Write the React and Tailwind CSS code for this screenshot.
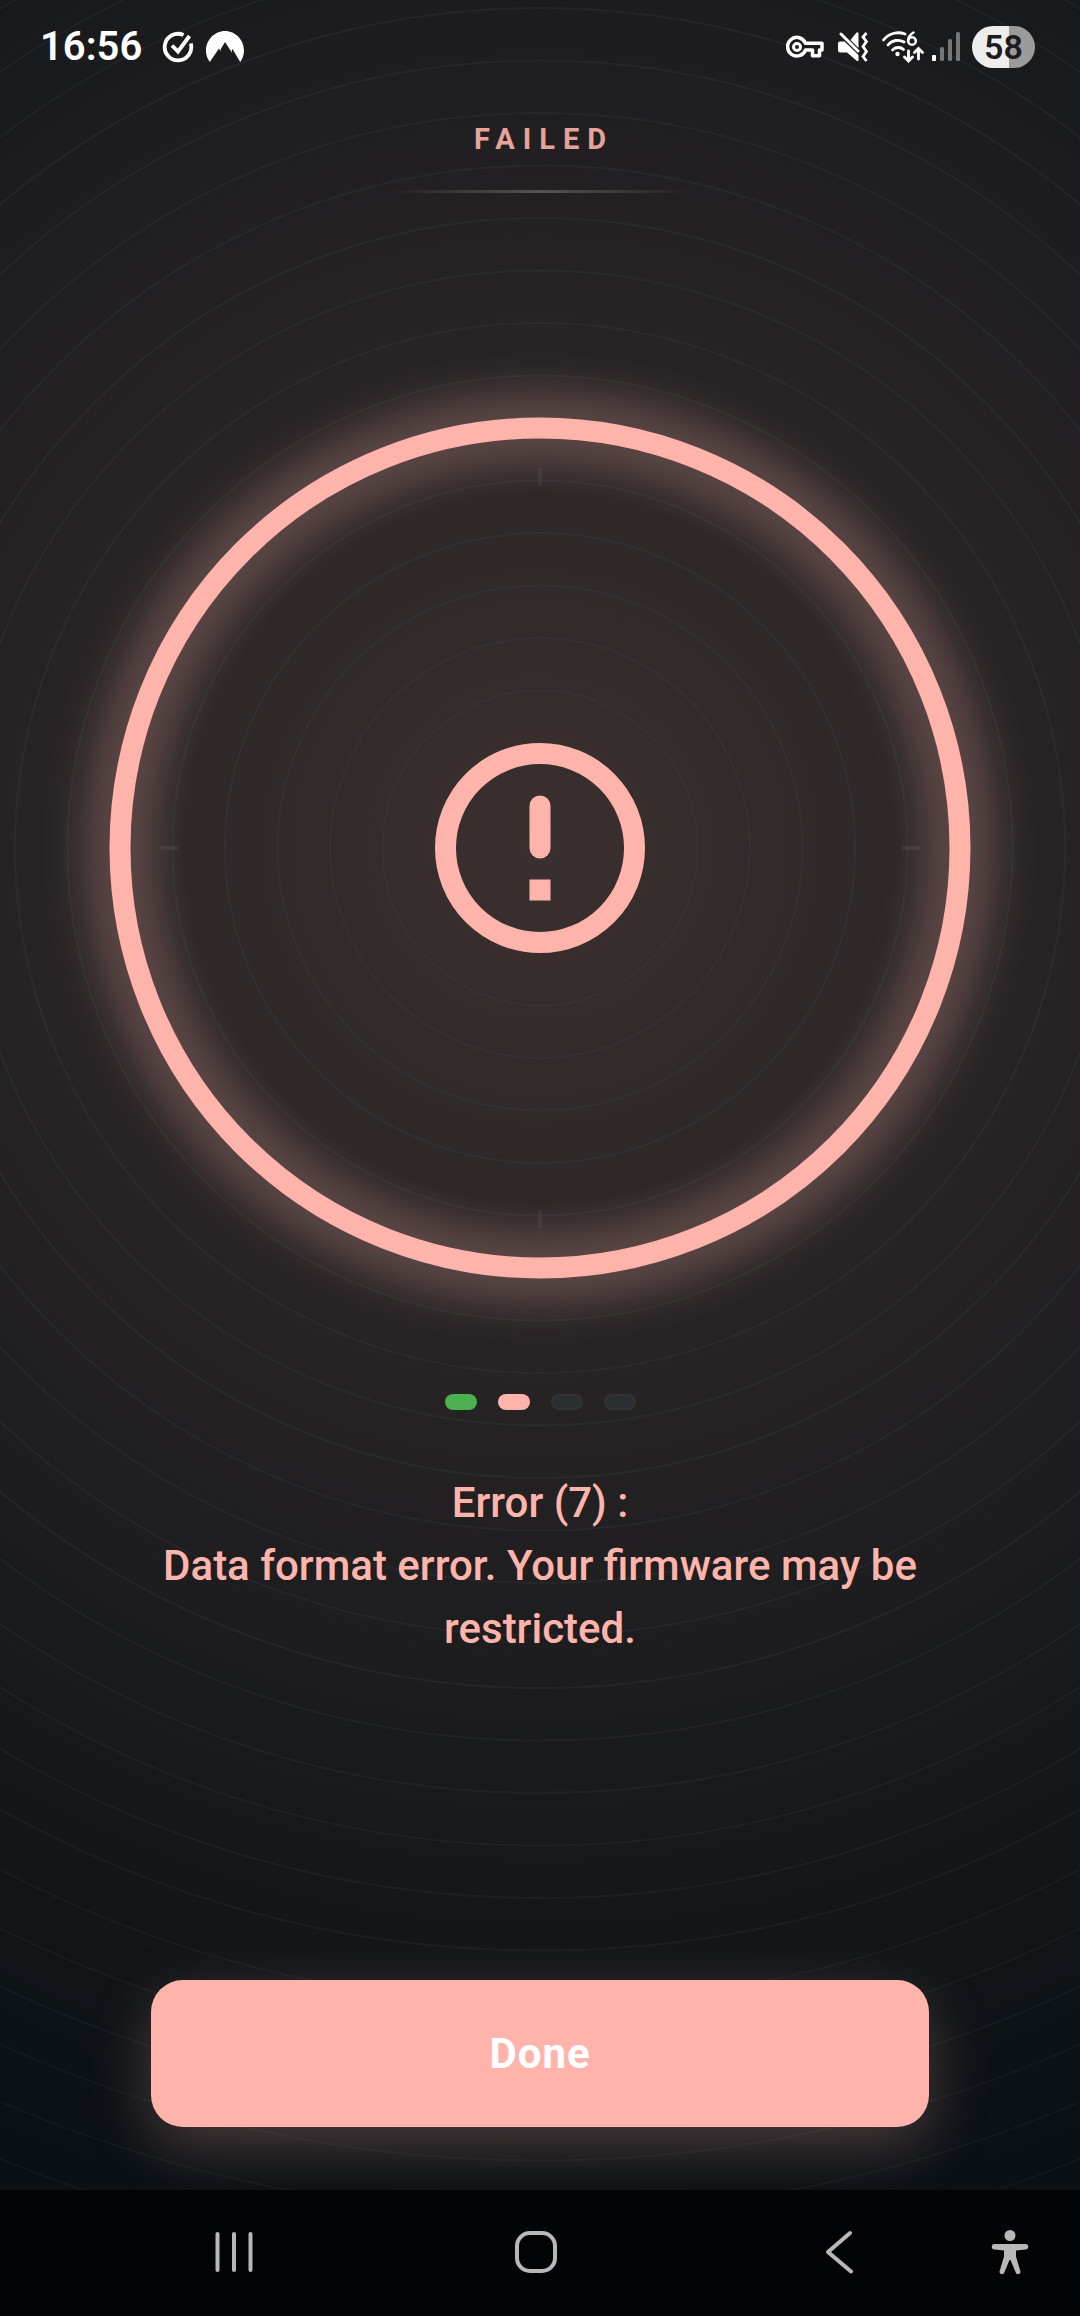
const RING_STEP = 52.5
const rings = Array.from({ length: 26 }, (_, i) => (i + 3) * RING_STEP)

function CheckCircleIcon() {
  return (
    <svg className="h-8 w-8" viewBox="0 0 32 32" fill="none" stroke="currentColor" strokeWidth="3.800" aria-hidden="true">
      <path d="M21.500 4A13.300 13.300 0 1 0 28.800 12.500" />
      <path d="M10 14.500l6 6L27.500 5" />
    </svg>
  )
}

function MountainIcon() {
  return (
    <svg className="h-8 w-[38px]" viewBox="0 0 38 32" fill="currentColor" aria-hidden="true">
      <path d="M3.800 31A18.500 18.500 0 0 1 0 19.500C0 9 8.500 0 19 0s19 9 19 19.500c0 4.200-1.300 8.200-3.800 11.500L26.500 18l-.8 1.500.5 2.500L19 11l-4.500 7.500.8 2.500-2.300-3.500z" />
    </svg>
  )
}

function KeyIcon() {
  return (
    <svg className="h-6 w-[38px]" viewBox="0 0 38 24" fill="none" stroke="currentColor" strokeWidth="3.500" aria-hidden="true">
      <path d="M19.500 8.300H36v6.800h-2.500v5.600h-7v-5.600h-7A9.300 9.300 0 1 1 19.500 8.300z" strokeLinejoin="round" />
      <circle cx="11" cy="12" r="3.500" strokeWidth="3" />
    </svg>
  )
}

function MuteVibrateIcon() {
  return (
    <svg className="h-[30px] w-[30px]" viewBox="0 0 30 30" aria-hidden="true">
      <path d="M2 9.500h4.500L20.500 23v6h-1.500L9 20.500H2a2 2 0 0 1-2-2v-7a2 2 0 0 1 2-2z" fill="currentColor" />
      <path d="M18.500 0.500h2V16L12.500 8z" fill="currentColor" />
      <path d="M3 2L20 19" stroke="currentColor" strokeWidth="3" strokeLinecap="round" />
      <path d="M28.500 1l-3.500 4 3.500 4.500-3.500 5 3.500 5-3.500 5 3.500 4.500" fill="none" stroke="currentColor" strokeWidth="2.800" />
    </svg>
  )
}

function WifiIcon() {
  return (
    <svg className="h-8 w-[42px]" viewBox="0 0 42 32" fill="none" stroke="currentColor" strokeWidth="2.800" strokeLinecap="round" aria-hidden="true">
      <path d="M1.500 9C7.500 1.500 16.500 .500 23 3" />
      <path d="M6 14C10 9 17 8 22 11" />
      <path d="M10.500 19c3-3 8-3.500 11-.500" />
      <circle cx="15.500" cy="23" r="2.200" fill="currentColor" stroke="none" />
      <path d="M31.500 1.500c-3.500 2-5.500 5-5.500 8.500" strokeWidth="2.500" />
      <circle cx="30" cy="10" r="3.800" strokeWidth="2.500" />
      <path d="M26.500 20v9.500M22.500 26l4 4 4-4M36.500 28V18M32.500 21.500l4-4 4 4" />
    </svg>
  )
}

function SignalIcon() {
  return (
    <svg className="h-[30px] w-7" viewBox="0 0 28 30" fill="currentColor" aria-hidden="true">
      <rect x="0" y="23" width="4" height="6" rx="1" />
      <g opacity="0.400">
        <rect x="8" y="15" width="4" height="14" rx="1.500" />
        <rect x="16" y="7" width="4" height="22" rx="1.500" />
        <rect x="24" y="0" width="4" height="29" rx="1.500" />
      </g>
    </svg>
  )
}

function StatusBar() {
  return (
    <div className="flex h-[94px] items-center justify-between pl-10 pr-[45px] text-white">
      <div className="flex items-center">
        <span className="text-[40px] leading-none font-semibold">16:56</span>
        <span className="ml-5 flex items-center gap-3">
          <CheckCircleIcon />
          <MountainIcon />
        </span>
      </div>
      <div className="flex items-center">
        <KeyIcon />
        <span className="ml-3.5 flex items-center gap-3.5">
          <MuteVibrateIcon />
          <WifiIcon />
        </span>
        <span className="ml-2 flex items-center gap-3">
          <SignalIcon />
          <span className="flex h-[42px] w-[63px] items-center justify-center rounded-full bg-linear-to-r from-[#ededed] from-58% to-[#9b9b9b] to-58% text-[34px] leading-none font-semibold text-[#1c1c1d]">
            58
          </span>
        </span>
      </div>
    </div>
  )
}

function Backdrop() {
  return (
    <svg
      className="absolute top-1/2 left-1/2 -z-10 h-[2940px] w-[2940px] max-w-none -translate-x-1/2 -translate-y-1/2"
      viewBox="-1470 -1470 2940 2940"
      aria-hidden="true"
    >
      <defs>
        <radialGradient id="halo" gradientUnits="userSpaceOnUse" cx="0" cy="0" r="1400">
          <stop offset="0" stopColor="#3b3030" />
          <stop offset="0.300" stopColor="#2b2627" />
          <stop offset="0.600" stopColor="#1c1c1e" />
          <stop offset="1" stopColor="#0a1014" />
        </radialGradient>
      </defs>
      <rect x="-1470" y="-1470" width="2940" height="2940" fill="url(#halo)" />
      {/* rings get fainter towards the edge */}
      <g fill="none" stroke="#343d40" strokeWidth="2">
        {rings.map((r) => (
          <circle key={r} r={r} strokeOpacity={0.45 - r / 5000} />
        ))}
      </g>
    </svg>
  )
}

function StatusRing() {
  return (
    <div className="relative mx-auto aspect-square w-[80%]">
      <Backdrop />
      <svg className="h-full w-full overflow-visible" viewBox="-432 -432 864 864" fill="none" role="img" aria-label="Failed">
        <defs>
          <filter id="glow" filterUnits="userSpaceOnUse" x="-540" y="-540" width="1080" height="1080">
            <feGaussianBlur stdDeviation="18" />
          </filter>
        </defs>
        <circle r="420" stroke="#ffb4ab" strokeOpacity="0.220" strokeWidth="74" filter="url(#glow)" />
        <circle r="420" stroke="#ffb4ab" strokeWidth="21" />
        <path d="M0-380v18M0 380v-18M-380 0h18M380 0h-18" stroke="#ffffff" strokeOpacity="0.050" strokeWidth="4" />
        <circle r="94.500" stroke="#ffb4ab" strokeWidth="21" />
        <rect x="-10.500" y="-52.500" width="21" height="63" rx="10.500" fill="#ffb4ab" />
        <rect x="-10.500" y="31.500" width="21" height="21" fill="#ffb4ab" />
      </svg>
    </div>
  )
}

const steps = [
  'bg-[#4caf50]',
  'bg-[#ffb4ab]',
  'bg-[#2c2f31] border-2 border-[#323335]',
  'bg-[#2c2f31] border-2 border-[#323335]',
]

function NavBar() {
  return (
    <nav className="grid h-[126px] grid-cols-[302fr_302fr_302fr_90fr] items-center bg-[#030406] pb-0.5 pl-[83px] text-[#b8b8b8]">
      <button type="button" aria-label="Recent apps" className="flex justify-center">
        <svg className="h-11 w-11" viewBox="0 0 44 44" stroke="currentColor" strokeWidth="4" strokeLinecap="round">
          <path d="M5.500 4v36M22 4v36M38.500 4v36" />
        </svg>
      </button>
      <button type="button" aria-label="Home" className="flex justify-center">
        <svg className="h-11 w-11" viewBox="0 0 44 44" fill="none" stroke="currentColor" strokeWidth="4">
          <rect x="3" y="3" width="38" height="38" rx="13" />
        </svg>
      </button>
      <button type="button" aria-label="Back" className="flex justify-center">
        <svg className="h-11 w-11" viewBox="0 0 44 44" fill="none" stroke="currentColor" strokeWidth="4" strokeLinecap="round" strokeLinejoin="round">
          <path d="M33 3L11 22l23 19.500" />
        </svg>
      </button>
      <button type="button" aria-label="Accessibility" className="flex justify-start">
        <svg className="h-11 w-11" viewBox="0 0 44 44" fill="currentColor">
          <circle cx="20" cy="5.500" r="5.500" />
          <path d="M4.500 14h31a2.500 2.500 0 0 1 0 5.500L26 20.500v6l4.300 14.500a2.400 2.400 0 0 1-4.600 1.600L20.500 30h-1l-5.200 12.600A2.400 2.400 0 0 1 9.700 41L14 26.500v-6l-9.500-1a2.500 2.500 0 0 1 0-5.500z" />
        </svg>
      </button>
    </nav>
  )
}

function App() {
  return (
    <div className="relative isolate flex min-h-screen flex-col overflow-hidden bg-[#0a1014] font-[Roboto,sans-serif]">
      <StatusBar />

      <main className="flex grow flex-col">
        <header className="flex flex-col items-center pt-7">
          <h1 className="pl-2 text-[29px] leading-[34px] font-bold tracking-[8px] text-[#e5a39b]">FAILED</h1>
          <div className="mt-[34px] h-[3px] w-[300px] bg-linear-to-r from-transparent via-[#555354] to-transparent" />
        </header>

        <div className="mt-[223px]">
          <StatusRing />
        </div>

        <div className="mt-[114px] flex justify-center gap-[21px]">
          {steps.map((step, i) => (
            <span key={i} className={`h-4 w-8 rounded-full ${step}`} />
          ))}
        </div>

        <p className="mt-[61px] px-[12%] text-center text-[42px] leading-[63px] font-medium text-[#ffb4ab]">
          Error (7) :<br />
          Data format error. Your firmware may be restricted.
        </p>

        <div className="mt-auto px-[14%] pb-[63px]">
          <button
            type="button"
            className="h-[147px] w-full rounded-[32px] bg-[#ffb4ab] text-[42px] font-bold tracking-[1px] text-white shadow-[0_20px_60px_rgba(255,180,171,0.250)]"
          >
            Done
          </button>
        </div>
      </main>

      <NavBar />
    </div>
  )
}

export default App
